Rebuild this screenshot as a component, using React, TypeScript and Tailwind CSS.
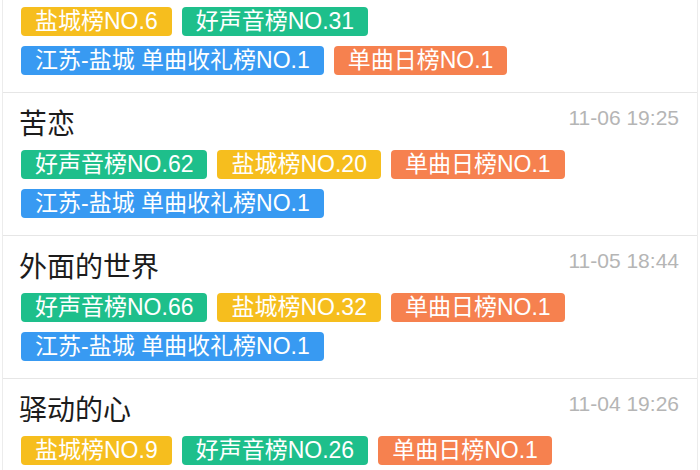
import React from "react";

type Tag = { text: string; color: "yellow" | "green" | "blue" | "orange" };

type Item = {
  title?: string;
  time?: string;
  rows: Tag[][];
};

const tagColors: Record<Tag["color"], string> = {
  yellow: "bg-[#f6be1e]",
  green: "bg-[#1ebf8b]",
  blue: "bg-[#389af2]",
  orange: "bg-[#f6814f]",
};

const items: Item[] = [
  {
    rows: [
      [
        { text: "盐城榜NO.6", color: "yellow" },
        { text: "好声音榜NO.31", color: "green" },
      ],
      [
        { text: "江苏-盐城 单曲收礼榜NO.1", color: "blue" },
        { text: "单曲日榜NO.1", color: "orange" },
      ],
    ],
  },
  {
    title: "苦恋",
    time: "11-06 19:25",
    rows: [
      [
        { text: "好声音榜NO.62", color: "green" },
        { text: "盐城榜NO.20", color: "yellow" },
        { text: "单曲日榜NO.1", color: "orange" },
      ],
      [{ text: "江苏-盐城 单曲收礼榜NO.1", color: "blue" }],
    ],
  },
  {
    title: "外面的世界",
    time: "11-05 18:44",
    rows: [
      [
        { text: "好声音榜NO.66", color: "green" },
        { text: "盐城榜NO.32", color: "yellow" },
        { text: "单曲日榜NO.1", color: "orange" },
      ],
      [{ text: "江苏-盐城 单曲收礼榜NO.1", color: "blue" }],
    ],
  },
  {
    title: "驿动的心",
    time: "11-04 19:26",
    rows: [
      [
        { text: "盐城榜NO.9", color: "yellow" },
        { text: "好声音榜NO.26", color: "green" },
        { text: "单曲日榜NO.1", color: "orange" },
      ],
    ],
  },
];

function Badge({ tag }: { tag: Tag }) {
  return (
    <span
      className={`${tagColors[tag.color]} h-[29px] px-[14px] rounded-[4px] text-white text-[23px] leading-[29px] whitespace-nowrap`}
    >
      {tag.text}
    </span>
  );
}

export default function App() {
  return (
    <div
      className="w-[700px] h-[470px] overflow-hidden bg-white"
      style={{ fontFamily: '"Liberation Sans", "Noto Sans CJK SC", sans-serif' }}
    >
      <div className="mx-[2px] border-x border-[#ececec] h-full">
        {items.map((item, i) => (
          <div
            key={i}
            className={`border-b border-[#e6e6e6] px-[18px] pb-[17px] ${
              item.title ? "pt-[11px]" : "pt-[7px]"
            }`}
          >
            {item.title && (
              <div className="flex items-start justify-between h-[36px] mb-[10px]">
                <span className="-ml-[2px] mt-[3px] text-[28px] leading-[36px] text-[#1c1c1c]">
                  {item.title}
                </span>
                <span className="text-[21px] leading-[28px] text-[#b5b5b5]">
                  {item.time}
                </span>
              </div>
            )}
            <div className="flex flex-col gap-[10px]">
              {item.rows.map((row, r) => (
                <div key={r} className="flex gap-[10px]">
                  {row.map((tag, t) => (
                    <Badge key={t} tag={tag} />
                  ))}
                </div>
              ))}
            </div>
          </div>
        ))}
      </div>
    </div>
  );
}
